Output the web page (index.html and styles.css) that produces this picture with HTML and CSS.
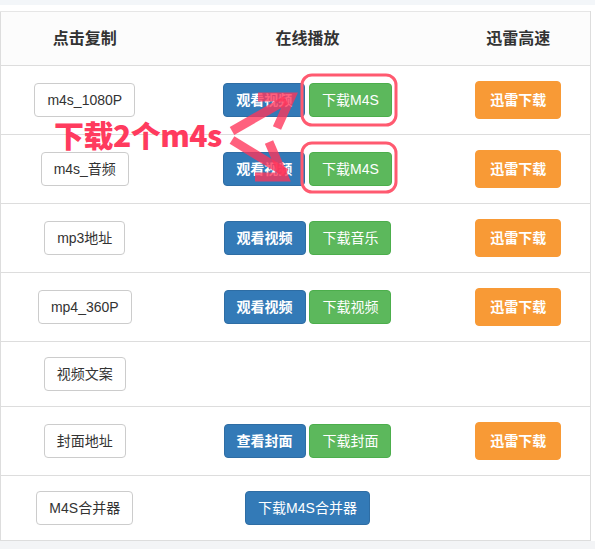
FILE: index.html
```html
<!DOCTYPE html>
<html lang="zh-CN">
<head>
    <meta charset="UTF-8">
    <meta name="viewport" content="width=device-width, initial-scale=1.0">
    <title>下载地址</title>
    <link rel="stylesheet" href="styles.css">
</head>
<body>
    <div class="topbar"></div>
    <div class="panel">
        <table class="links">
            <colgroup>
                <col class="c-copy">
                <col class="c-play">
                <col class="c-fast">
            </colgroup>
            <thead>
                <tr>
                    <th>点击复制</th>
                    <th>在线播放</th>
                    <th>迅雷高速</th>
                </tr>
            </thead>
            <tbody>
                <tr>
                    <td><span class="btn btn-default">m4s_1080P</span></td>
                    <td><span class="btn btn-primary bold">观看视频</span> <span class="btn btn-success">下载M4S</span></td>
                    <td><span class="btn btn-warning">迅雷下载</span></td>
                </tr>
                <tr>
                    <td><span class="btn btn-default">m4s_音频</span></td>
                    <td><span class="btn btn-primary bold">观看视频</span> <span class="btn btn-success">下载M4S</span></td>
                    <td><span class="btn btn-warning">迅雷下载</span></td>
                </tr>
                <tr>
                    <td><span class="btn btn-default">mp3地址</span></td>
                    <td><span class="btn btn-primary bold">观看视频</span> <span class="btn btn-success">下载音乐</span></td>
                    <td><span class="btn btn-warning">迅雷下载</span></td>
                </tr>
                <tr>
                    <td><span class="btn btn-default">mp4_360P</span></td>
                    <td><span class="btn btn-primary bold">观看视频</span> <span class="btn btn-success">下载视频</span></td>
                    <td><span class="btn btn-warning">迅雷下载</span></td>
                </tr>
                <tr>
                    <td><span class="btn btn-default">视频文案</span></td>
                    <td></td>
                    <td></td>
                </tr>
                <tr>
                    <td><span class="btn btn-default">封面地址</span></td>
                    <td><span class="btn btn-primary bold">查看封面</span> <span class="btn btn-success">下载封面</span></td>
                    <td><span class="btn btn-warning">迅雷下载</span></td>
                </tr>
                <tr>
                    <td><span class="btn btn-default">M4S合并器</span></td>
                    <td><span class="btn btn-primary">下载M4S合并器</span></td>
                    <td></td>
                </tr>
            </tbody>
        </table>
    </div>

    <!-- screenshot annotation -->
    <div class="note">下载2个m4s</div>
    <svg class="marks" width="595" height="549" viewBox="0 0 595 549">
        <rect x="302" y="75" width="94" height="50" rx="10" class="box"/>
        <rect x="302" y="143" width="94" height="49" rx="10" class="box"/>
        <g class="arrow">
            <path d="M232 131 L286 100"/>
            <path d="M258 97 L291 97 L277 128"/>
        </g>
        <g class="arrow">
            <path d="M232 140 L286 173"/>
            <path d="M269 142 L284 177 L255 177"/>
        </g>
    </svg>
</body>
</html>
```

FILE: styles.css
```css
body {
    margin: 0;
    padding: 0;
    width: 595px;
    height: 549px;
    position: relative;
    background: #f3f4f6;
    font-family: "Liberation Sans", Arial, "Noto Sans CJK SC", sans-serif;
    font-size: 14px;
    color: #333;
    overflow: hidden;
}
.topbar {
    height: 5px;
    background: #f3f6f9;
}
.panel {
    background: #fff;
    padding-top: 6px;
}
.links {
    width: 590px;
    table-layout: fixed;
    border-collapse: collapse;
    border: 1px solid #ddd;
    border-top: 1px solid #e6e6e6;
}
.c-copy { width: 168px; }
.c-play { width: 278px; }
.c-fast { width: 144px; }
.links th {
    background: #fcfcfc;
    padding: 15px 8px;
    line-height: 23px;
    font-size: 16px;
    font-weight: bold;
    color: #333;
    text-align: center;
    border-bottom: 1px solid #ddd;
}
.links td {
    padding: 15px 8px;
    text-align: center;
    vertical-align: middle;
    border-top: 1px solid #ddd;
    white-space: nowrap;
}
.btn {
    display: inline-block;
    padding: 6px 12px;
    line-height: 20px;
    font-size: 14px;
    border: 1px solid transparent;
    border-radius: 4px;
    vertical-align: middle;
    cursor: pointer;
}
.btn-default {
    background: #fff;
    border-color: #ccc;
    color: #333;
}
.btn-primary {
    background: #337ab7;
    border-color: #2e6da4;
    color: #fff;
}
.btn-success {
    background: #5cb85c;
    border-color: #4cae4c;
    color: #fff;
}
.btn-warning {
    background: #f89a36;
    border-color: #f89a36;
    color: #fff;
    font-weight: bold;
    padding: 9px 14px;
    line-height: 18px;
}
.bold {
    font-weight: bold;
}
.note {
    position: absolute;
    left: 54px;
    top: 114px;
    font-family: "Noto Sans CJK SC", sans-serif;
    font-size: 30px;
    font-weight: 900;
    line-height: 40px;
    letter-spacing: -0.5px;
    color: #ff3b5e;
}
.marks {
    position: absolute;
    left: 0;
    top: 0;
    pointer-events: none;
}
.box {
    fill: none;
    stroke: #ff5a70;
    stroke-width: 3;
}
.arrow path {
    fill: none;
    stroke: rgba(255, 52, 90, 0.78);
    stroke-width: 9;
    stroke-linejoin: miter;
}
```
